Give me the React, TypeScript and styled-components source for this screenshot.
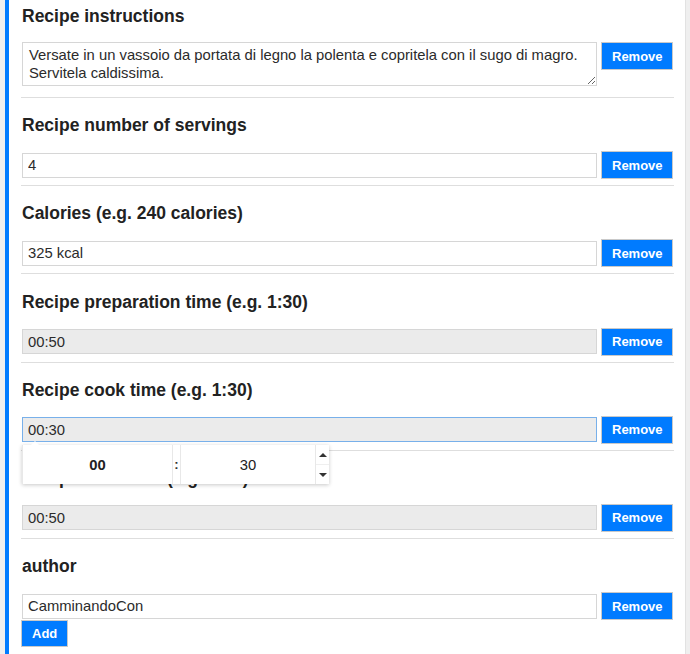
import React from 'react';
import styled, { createGlobalStyle } from 'styled-components';

const GlobalStyle = createGlobalStyle`
  html, body {
    margin: 0;
    height: 100%;
  }
  body {
    background: #efefef;
    font-family: "Liberation Sans", Arial, sans-serif;
    color: #212529;
  }
`;

const Panel = styled.main`
  box-sizing: border-box;
  width: 681px;
  min-height: 100vh;
  margin-left: 5px;
  padding: 0 11px 0 12px;
  background: #fff;
  border-left: 4px solid #007bff;
  border-right: 1px solid #e2e2e2;
`;

const Section = styled.section<{ $last?: boolean }>`
  position: relative;
  padding: 17.2px 0 ${(p) => (p.$last ? '0' : '6px')};
  border-bottom: ${(p) => (p.$last ? 'none' : '1px solid #dedede')};

  &:first-child {
    padding-top: 6px;
  }
`;

const Label = styled.h3`
  margin: 0 0 16px 1px;
  font-size: 17.5px;
  line-height: 20px;
  font-weight: 700;
  color: #222;
`;

const Row = styled.div<{ $top?: boolean }>`
  display: flex;
  align-items: ${(p) => (p.$top ? 'flex-start' : 'center')};
  gap: 4px;
  padding: 0 1px;
`;

const Field = styled.div`
  position: relative;
  flex: 1;
  display: flex;
`;

const TextInput = styled.input<{ $locked?: boolean; $focused?: boolean }>`
  box-sizing: border-box;
  width: 100%;
  height: 25px;
  margin: 0;
  padding: 0 5px;
  font: 14.8px "Liberation Sans", Arial, sans-serif;
  color: #2b2b2b;
  background: ${(p) => (p.$locked ? '#ebebeb' : '#fff')};
  border: 1px solid ${(p) => (p.$focused ? '#78b0ea' : '#d6d6d6')};
  border-radius: 0;
  outline: none;
`;

const TextArea = styled.textarea`
  flex: 1;
  box-sizing: border-box;
  height: 44px;
  margin: 0 0 5px;
  padding: 3px 6px 2px;
  font: 14.8px/18px "Liberation Sans", Arial, sans-serif;
  color: #2b2b2b;
  border: 1px solid #d6d6d6;
  border-radius: 0;
  outline: none;
`;

const Button = styled.button`
  box-sizing: border-box;
  height: 28px;
  padding: 0 10px;
  margin: 0;
  font: 700 13px "Liberation Sans", Arial, sans-serif;
  color: #fff;
  background: #007bff;
  border: 1px solid #c9c9c9;
  border-radius: 0;
  cursor: pointer;
`;

const RemoveButton = styled(Button)`
  width: 72px;
`;

const AddButton = styled(Button)`
  height: 27px;
  width: 47px;
`;

const Picker = styled.div`
  position: absolute;
  top: calc(100% + 3px);
  left: 0;
  z-index: 2;
  display: flex;
  width: 307px;
  height: 39px;
  background: #fff;
  box-shadow: 0 1px 4px rgba(0, 0, 0, 0.22);

  &::before {
    content: '';
    position: absolute;
    top: -4px;
    left: 9px;
    border: 4px solid transparent;
    border-top: 0;
    border-bottom-color: #fff;
  }
`;

const TimeCell = styled.div<{ $bold?: boolean; $width: number }>`
  box-sizing: border-box;
  width: ${(p) => p.$width}px;
  display: flex;
  align-items: center;
  justify-content: center;
  font-size: 14.8px;
  font-weight: ${(p) => (p.$bold ? 700 : 400)};
  color: #222;
  border-left: 1px solid #e8e8e8;
  border-right: 1px solid #e8e8e8;
`;

const Colon = styled.div`
  width: 7px;
  display: flex;
  align-items: center;
  justify-content: center;
  font-size: 13px;
  font-weight: 700;
  color: #333;
`;

const Spinner = styled.div`
  flex: 1;
  display: flex;
  flex-direction: column;
`;

const Arrow = styled.div<{ $down?: boolean }>`
  flex: 1;
  display: flex;
  align-items: center;
  justify-content: center;
  border-top: ${(p) => (p.$down ? '1px solid #efefef' : 'none')};

  &::after {
    content: '';
    border-left: 4px solid transparent;
    border-right: 4px solid transparent;
    ${(p) => (p.$down ? 'border-top: 4px solid #333;' : 'border-bottom: 4px solid #333;')}
  }
`;

type Item = {
  label: string;
  value: string;
  locked?: boolean;
  picker?: boolean;
};

const items: Item[] = [
  { label: 'Recipe number of servings', value: '4' },
  { label: 'Calories (e.g. 240 calories)', value: '325 kcal' },
  { label: 'Recipe preparation time (e.g. 1:30)', value: '00:50', locked: true },
  { label: 'Recipe cook time (e.g. 1:30)', value: '00:30', locked: true, picker: true },
  { label: 'Recipe total time (e.g. 1:30)', value: '00:50', locked: true },
];

const App: React.FC = () => {
  return (
    <>
      <GlobalStyle />
      <Panel>
        <Section>
          <Label>Recipe instructions</Label>
          <Row $top>
            <TextArea
              readOnly
              value="Versate in un vassoio da portata di legno la polenta e copritela con il sugo di magro. Servitela caldissima."
            />
            <RemoveButton>Remove</RemoveButton>
          </Row>
        </Section>

        {items.map((item) => (
          <Section key={item.label}>
            <Label>{item.label}</Label>
            <Row>
              <Field>
                <TextInput readOnly value={item.value} $locked={item.locked} $focused={item.picker} />
                {item.picker && (
                  <Picker>
                    <TimeCell $bold $width={151}>00</TimeCell>
                    <Colon>:</Colon>
                    <TimeCell $width={136}>30</TimeCell>
                    <Spinner>
                      <Arrow />
                      <Arrow $down />
                    </Spinner>
                  </Picker>
                )}
              </Field>
              <RemoveButton>Remove</RemoveButton>
            </Row>
          </Section>
        ))}

        <Section $last>
          <Label>author</Label>
          <Row>
            <Field>
              <TextInput readOnly value="CamminandoCon" />
            </Field>
            <RemoveButton>Remove</RemoveButton>
          </Row>
          <AddButton>Add</AddButton>
        </Section>
      </Panel>
    </>
  );
};

export default App;
